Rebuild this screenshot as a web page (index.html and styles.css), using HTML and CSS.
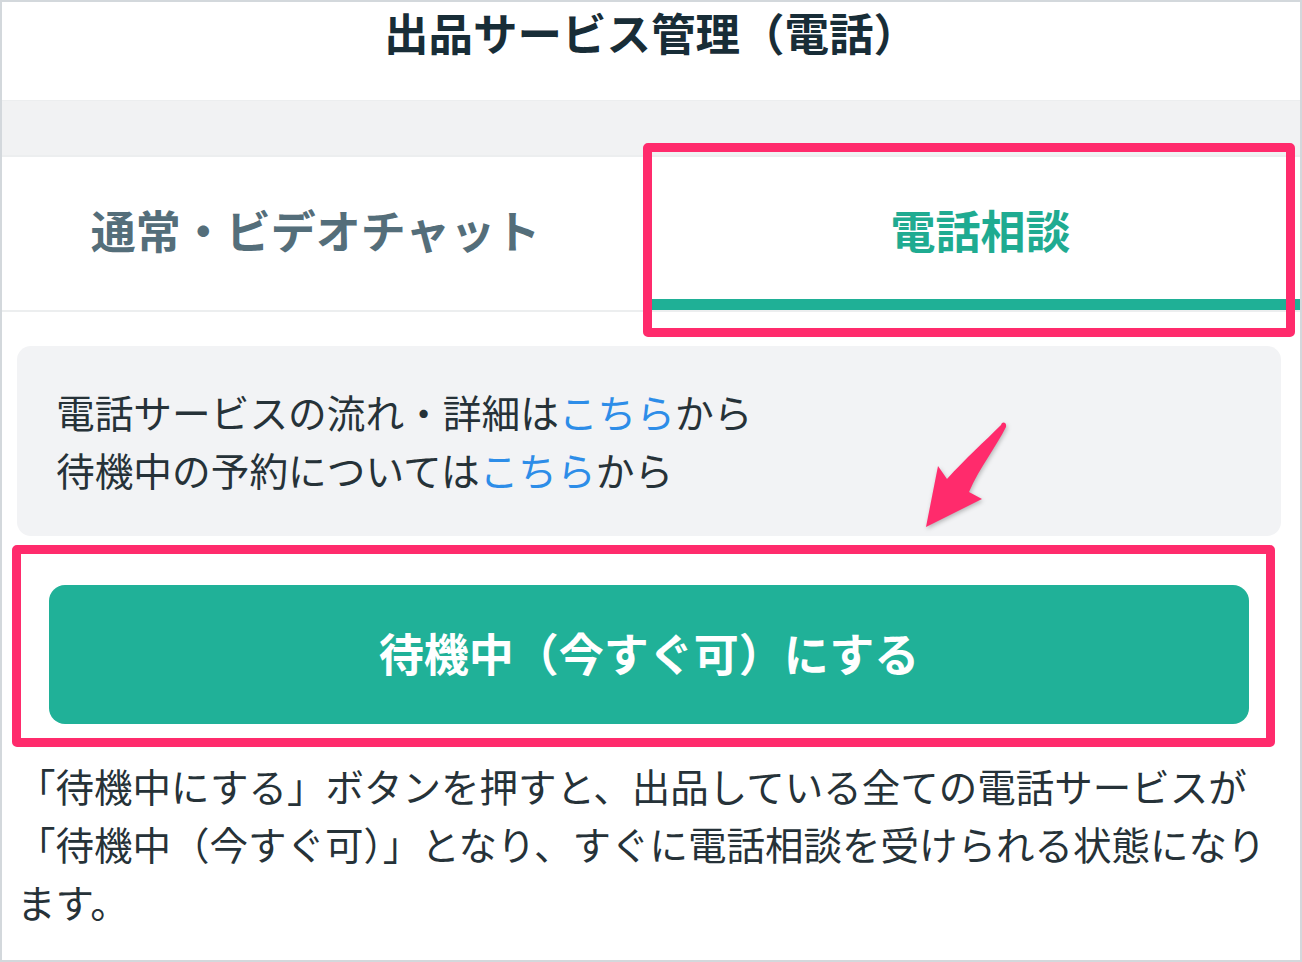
FILE: index.html
```html
<!DOCTYPE html>
<html lang="ja">
<head>
<meta charset="utf-8">
<title>出品サービス管理（電話）</title>
<link rel="stylesheet" href="styles.css">
</head>
<body>
<div class="frame">
  <header class="header">
    <h1 class="title">出品サービス管理（電話）</h1>
  </header>
  <div class="band"></div>
  <nav class="tabs">
    <div class="tab tab-left">通常・ビデオチャット</div>
    <div class="tab tab-active">電話相談</div>
  </nav>
  <div class="info">
    <p class="info-line">電話サービスの流れ・詳細は<a class="link">こちら</a>から</p>
    <p class="info-line">待機中の予約については<a class="link">こちら</a>から</p>
  </div>
  <button class="btn">待機中（今すぐ可）にする</button>
  <p class="desc">「待機中にする」ボタンを押すと、出品している全ての電話サービスが<br>「待機中（今すぐ可）」となり、すぐに電話相談を受けられる状態になり<br>ます。</p>

  <div class="mark mark-tab"></div>
  <div class="mark mark-btn"></div>
  <svg class="arrow" viewBox="0 0 1302 962" width="1302" height="962" aria-hidden="true">
    <path d="M1001 425 C1002 421 1007 422 1006 427 C996 447 980 467 969 492 L982 499 L926 527 L938 466 L947 479 C965 459 985 441 1001 425 Z" fill="#ff2b6c"/>
  </svg>
</div>
</body>
</html>
```

FILE: styles.css
```css
* { box-sizing: border-box; }

html, body {
  margin: 0;
  padding: 0;
  background: #ffffff;
}

body {
  font-family: "Noto Sans CJK JP", "Noto Sans", sans-serif;
  color: #263238;
}

.frame {
  position: relative;
  width: 1302px;
  height: 962px;
  border: 2px solid #d3d8dc;
  background: #ffffff;
  overflow: hidden;
}

.header {
  height: 99px;
  display: flex;
  align-items: flex-start;
  justify-content: center;
  border-bottom: 1px solid #eceeef;
}

.title {
  margin: 2px 0 0 0;
  font-size: 44.5px;
  line-height: 56px;
  font-weight: 700;
  color: #182d37;
}

.band {
  height: 54px;
  background: #f1f2f3;
}

.tabs {
  display: flex;
  border-top: 2px solid #eceeef;
  border-bottom: 2px solid #eceeef;
}

.tab {
  flex: 0 0 50%;
  width: 50%;
  height: 153px;
  padding-top: 3px;
  border-bottom: 11px solid transparent;
  display: flex;
  align-items: center;
  justify-content: center;
  font-size: 45px;
  font-weight: 700;
  color: #546e7a;
}

.tab-left {
  padding-right: 22px;
}

.tab-active {
  padding-left: 10px;
  color: #1fab91;
  border-bottom-color: #1fb096;
}

.info {
  margin: 34px 19px 0 15px;
  height: 190px;
  padding: 36px 39px;
  background: #f2f3f5;
  border-radius: 14px;
}

.info-line {
  margin: 0;
  font-size: 38.7px;
  line-height: 58px;
  color: #263238;
}

.link {
  color: #2d8de8;
  text-decoration: none;
}

.btn {
  display: flex;
  align-items: center;
  justify-content: center;
  width: 1200px;
  height: 139px;
  margin: 49px 0 0 47px;
  border: none;
  border-radius: 16px;
  background: #20b198;
  color: #ffffff;
  font-family: "Noto Sans CJK JP", "Noto Sans", sans-serif;
  font-size: 45px;
  font-weight: 700;
  padding: 0 0 5px 0;
}

.desc {
  margin: 32px 0 0 15px;
  font-size: 38.5px;
  line-height: 58px;
  color: #263238;
  white-space: nowrap;
}

.mark {
  position: absolute;
  border: 9px solid #ff2b6c;
  border-radius: 5px;
}

.mark-tab {
  left: 641px;
  top: 141px;
  width: 652px;
  height: 194px;
}

.mark-btn {
  left: 10px;
  top: 543px;
  width: 1263px;
  height: 202px;
}

.arrow {
  position: absolute;
  left: -2px;
  top: -2px;
  pointer-events: none;
  filter: drop-shadow(1px 2px 2px rgba(0, 0, 0, 0.25));
}
```
